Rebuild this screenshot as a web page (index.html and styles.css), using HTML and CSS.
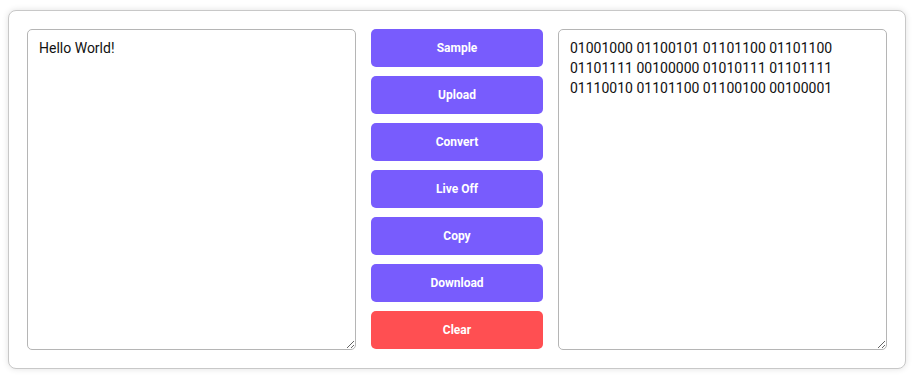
FILE: index.html
```html
<!DOCTYPE html>
<html lang="en">
<head>
  <meta charset="UTF-8">
  <meta name="viewport" content="width=device-width, initial-scale=1.0">
  <title>Text to Binary Converter</title>
  <link rel="stylesheet" href="styles.css">
</head>
<body>
  <div class="converter">
    <!-- Input text -->
    <textarea class="text-box" id="input">Hello World!</textarea>

    <!-- Action buttons -->
    <div class="actions">
      <button class="btn">Sample</button>
      <button class="btn">Upload</button>
      <button class="btn">Convert</button>
      <button class="btn">Live Off</button>
      <button class="btn">Copy</button>
      <button class="btn">Download</button>
      <button class="btn btn-clear">Clear</button>
    </div>

    <!-- Binary output -->
    <textarea class="text-box" id="output">01001000 01100101 01101100 01101100 01101111 00100000 01010111 01101111 01110010 01101100 01100100 00100001</textarea>
  </div>
</body>
</html>
```

FILE: styles.css
```css
/* General Body Styling */
body {
  font-family: Roboto, "Liberation Sans", Arial, sans-serif;
  margin: 0;
  padding: 10px 8px;
  background: #ffffff;
}

/* Card holding the converter */
.converter {
  width: 898px;
  height: 359px;
  box-sizing: border-box;
  padding: 18px;
  border: 1px solid #c8c8c8;
  border-radius: 8px;
  background: #fff;
  box-shadow: 0 0 6px rgba(0, 0, 0, 0.12);
  display: grid;
  grid-template-columns: 1fr 172px 1fr;
  gap: 15px;
}

.text-box {
  box-sizing: border-box;
  width: 100%;
  height: 100%;
  padding: 8px 11px;
  border: 1px solid #b5b5b5;
  border-radius: 5px;
  font-family: Roboto, "Liberation Sans", Arial, sans-serif;
  font-size: 14px;
  line-height: 20px;
  color: #111;
  resize: both;
  outline: none;
}

.actions {
  display: flex;
  flex-direction: column;
  gap: 9px;
}

.btn {
  height: 38px;
  border: none;
  border-radius: 5px;
  background-color: #785cfd;
  color: #fff;
  font-family: Roboto, "Liberation Sans", Arial, sans-serif;
  font-size: 12px;
  font-weight: bold;
  cursor: pointer;
}

.btn:hover {
  background-color: #6548f0;
}

.btn-clear {
  background-color: #ff4f52;
}
```
